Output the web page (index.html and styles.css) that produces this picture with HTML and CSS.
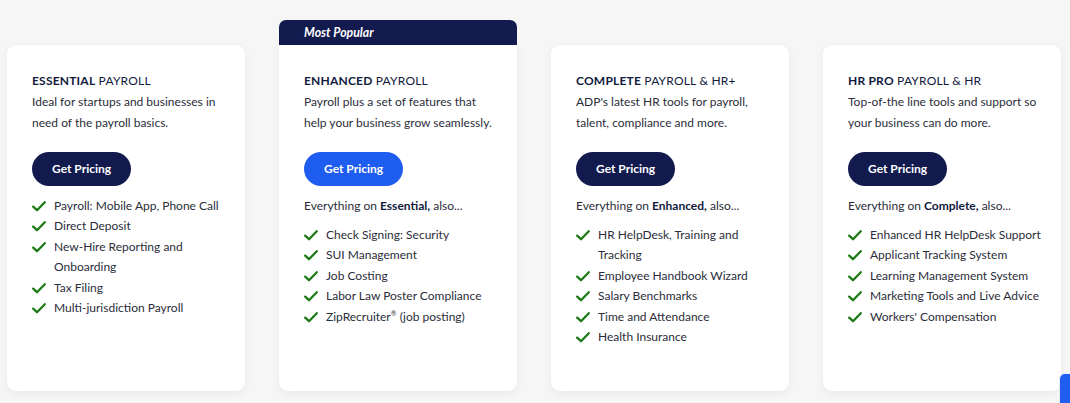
FILE: index.html
```html
<!DOCTYPE html>
<html lang="en">
<head>
<meta charset="utf-8">
<title>Payroll Plans</title>
<link rel="stylesheet" href="styles.css">
</head>
<body>
<svg width="0" height="0" class="defs">
  <defs>
    <symbol id="chk" viewBox="0 0 14 11">
      <path d="M1.2 5.6 L5 9.2 L12.8 1.2" fill="none" stroke="#1d7a14" stroke-width="2.3" stroke-linecap="round" stroke-linejoin="round"/>
    </symbol>
  </defs>
</svg>
<main class="plans">
  <section class="plan">
    <div class="tab tab-empty"></div>
    <div class="card">
      <h2 class="title"><b>ESSENTIAL</b> PAYROLL</h2>
      <p class="desc">Ideal for startups and businesses in need of the payroll basics.</p>
      <a class="btn">Get Pricing</a>
      <ul class="features">
        <li><svg class="ck"><use href="#chk"/></svg><span>Payroll: Mobile App, Phone Call</span></li>
        <li><svg class="ck"><use href="#chk"/></svg><span>Direct Deposit</span></li>
        <li><svg class="ck"><use href="#chk"/></svg><span>New-Hire Reporting and Onboarding</span></li>
        <li><svg class="ck"><use href="#chk"/></svg><span>Tax Filing</span></li>
        <li><svg class="ck"><use href="#chk"/></svg><span>Multi-jurisdiction Payroll</span></li>
      </ul>
    </div>
  </section>
  <section class="plan">
    <div class="tab">Most Popular</div>
    <div class="card card-pop">
      <h2 class="title"><b>ENHANCED</b> PAYROLL</h2>
      <p class="desc">Payroll plus a set of features that help your business grow seamlessly.</p>
      <a class="btn btn-blue">Get Pricing</a>
      <p class="also">Everything on <b>Essential,</b> also...</p>
      <ul class="features">
        <li><svg class="ck"><use href="#chk"/></svg><span>Check Signing: Security</span></li>
        <li><svg class="ck"><use href="#chk"/></svg><span>SUI Management</span></li>
        <li><svg class="ck"><use href="#chk"/></svg><span>Job Costing</span></li>
        <li><svg class="ck"><use href="#chk"/></svg><span>Labor Law Poster Compliance</span></li>
        <li><svg class="ck"><use href="#chk"/></svg><span>ZipRecruiter<sup>®</sup> (job posting)</span></li>
      </ul>
    </div>
  </section>
  <section class="plan">
    <div class="tab tab-empty"></div>
    <div class="card">
      <h2 class="title"><b>COMPLETE</b> PAYROLL &amp; HR+</h2>
      <p class="desc">ADP's latest HR tools for payroll, talent, compliance and more.</p>
      <a class="btn">Get Pricing</a>
      <p class="also">Everything on <b>Enhanced,</b> also...</p>
      <ul class="features">
        <li><svg class="ck"><use href="#chk"/></svg><span>HR HelpDesk, Training and Tracking</span></li>
        <li><svg class="ck"><use href="#chk"/></svg><span>Employee Handbook Wizard</span></li>
        <li><svg class="ck"><use href="#chk"/></svg><span>Salary Benchmarks</span></li>
        <li><svg class="ck"><use href="#chk"/></svg><span>Time and Attendance</span></li>
        <li><svg class="ck"><use href="#chk"/></svg><span>Health Insurance</span></li>
      </ul>
    </div>
  </section>
  <section class="plan">
    <div class="tab tab-empty"></div>
    <div class="card">
      <h2 class="title"><b>HR PRO</b> PAYROLL &amp; HR</h2>
      <p class="desc">Top-of-the line tools and support so your business can do more.</p>
      <a class="btn">Get Pricing</a>
      <p class="also">Everything on <b>Complete,</b> also...</p>
      <ul class="features">
        <li><svg class="ck"><use href="#chk"/></svg><span>Enhanced HR HelpDesk Support</span></li>
        <li><svg class="ck"><use href="#chk"/></svg><span>Applicant Tracking System</span></li>
        <li><svg class="ck"><use href="#chk"/></svg><span>Learning Management System</span></li>
        <li><svg class="ck"><use href="#chk"/></svg><span>Marketing Tools and Live Advice</span></li>
        <li><svg class="ck"><use href="#chk"/></svg><span>Workers' Compensation</span></li>
      </ul>
    </div>
  </section>
</main>
<div class="chat"></div>
</body>
</html>
```
FILE: styles.css
```css
html, body {
  margin: 0;
  padding: 0;
}
body {
  background: #f6f6f6;
  font-family: Lato, "Noto Sans", Arial, sans-serif;
  font-size: 12px;
  color: #1f2233;
  width: 1070px;
  height: 403px;
  overflow: hidden;
}
.defs {
  position: absolute;
}
.plans {
  display: flex;
  gap: 34px;
  padding: 20px 0 0 7px;
}
.plan {
  width: 238px;
  display: flex;
  flex-direction: column;
}
.tab {
  height: 25px;
  box-sizing: border-box;
  background: #121a4e;
  color: #fff;
  font-weight: 700;
  font-style: italic;
  font-size: 12.3px;
  line-height: 25px;
  padding-left: 25px;
  border-radius: 7px 7px 0 0;
}
.tab-empty {
  background: transparent;
}
.card {
  height: 346px;
  box-sizing: border-box;
  background: #fff;
  border-radius: 9px;
  padding: 25px 18px 0 25px;
  box-shadow: 0 2px 10px rgba(0, 0, 0, 0.06);
}
.card-pop {
  border-radius: 0 0 9px 9px;
}
.title {
  margin: 0;
  font-size: 12px;
  font-weight: 400;
  line-height: 21px;
  color: #121a3e;
  letter-spacing: 0.2px;
}
.title b {
  font-weight: 700;
}
.desc {
  margin: 0;
  line-height: 21px;
  color: #2b2d3a;
}
.btn {
  display: inline-block;
  margin-top: 19px;
  height: 34px;
  line-height: 34px;
  padding: 0 20px;
  border-radius: 17px;
  background: #121a4e;
  color: #fff;
  font-weight: 700;
  font-size: 12px;
}
.btn-blue {
  background: #1f5cf0;
}
.also {
  margin: 10px 0 0;
  line-height: 20.4px;
  color: #2b2d3a;
}
.also b {
  font-weight: 700;
  color: #121a3e;
}
.features {
  list-style: none;
  margin: 10px 0 0;
  padding: 0;
}
.also + .features {
  margin-top: 8.5px;
}
.features li {
  display: flex;
  align-items: flex-start;
  line-height: 20.4px;
  color: #2b2d3a;
}
.ck {
  flex: none;
  width: 14px;
  height: 11px;
  margin: 5px 8px 0 0;
}
.features sup {
  font-size: 7px;
  line-height: 0;
}
.chat {
  position: fixed;
  left: 1060px;
  top: 374px;
  width: 40px;
  height: 60px;
  background: #1f5cf0;
  border-radius: 5px;
  box-shadow: 0 0 0 1px #e8eaf4;
}
```
